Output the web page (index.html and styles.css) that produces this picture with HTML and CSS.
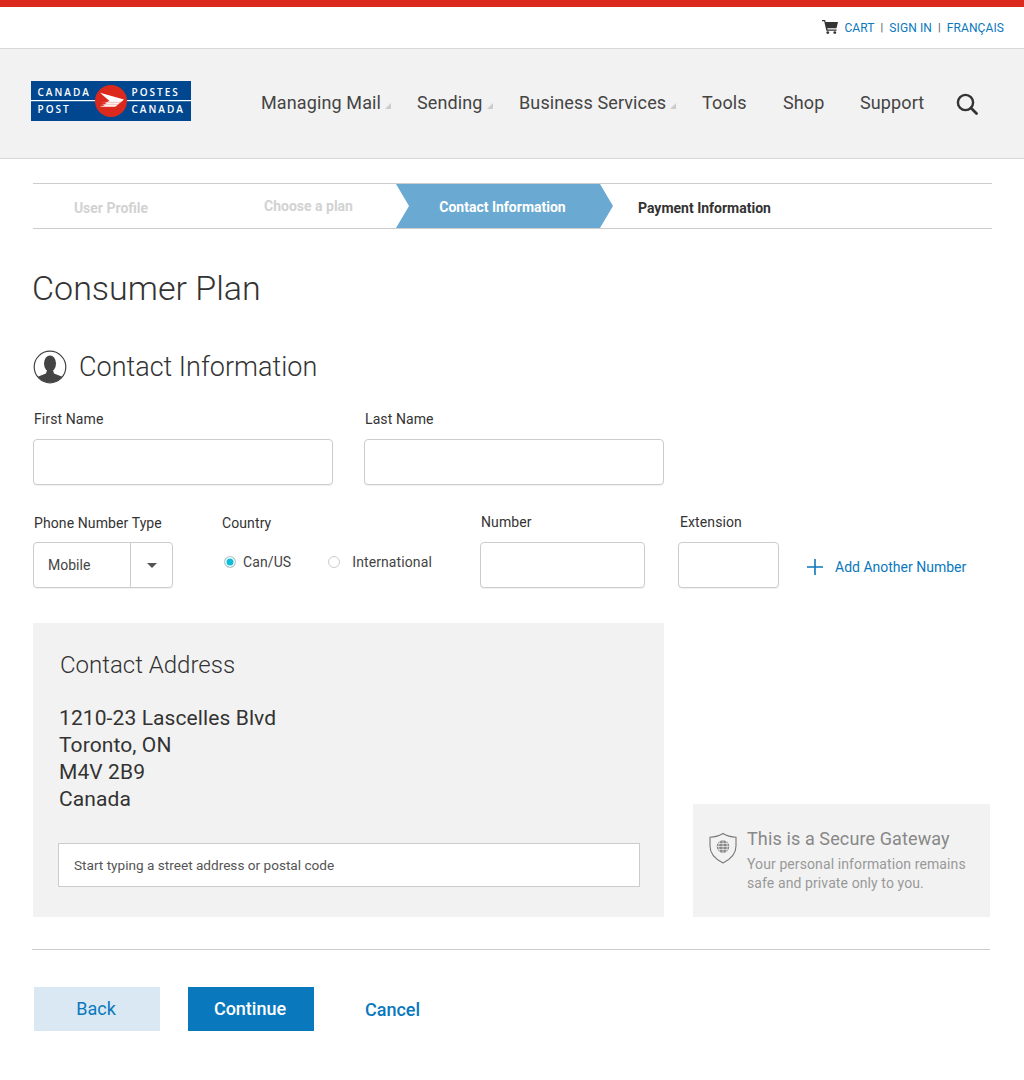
FILE: index.html
```html
<!DOCTYPE html>
<html lang="en">
<head>
  <meta charset="UTF-8">
  <meta name="viewport" content="width=device-width, initial-scale=1.0">
  <title>Consumer Plan - Contact Information</title>
  <link rel="stylesheet" href="styles.css">
</head>
<body>
  <div class="util-bar">
    <svg class="cart-icon" width="16" height="14" viewBox="0 0 16 14">
      <path d="M0 0h3l.7 2H16l-1.500 6.200H5.200l.4 1.400h9v1.200H4.400L2.200 1.200H0z" fill="#333"/>
      <circle cx="5.800" cy="12.600" r="1.400" fill="#333"/>
      <circle cx="12.800" cy="12.600" r="1.400" fill="#333"/>
    </svg>
    <a class="util-link" href="#">CART</a>
    <span class="util-sep">|</span>
    <a class="util-link" href="#">SIGN IN</a>
    <span class="util-sep">|</span>
    <a class="util-link" href="#">FRANÇAIS</a>
  </div>

  <header class="site-header">
    <svg class="logo" width="160" height="40" viewBox="0 0 160 40">
      <rect width="160" height="40" fill="#00478f"/>
      <rect y="19" width="160" height="1.200" fill="#fff"/>
      <g class="logo-text">
        <text x="6.500" y="15">CANADA</text>
        <text x="6.500" y="32">POST</text>
        <text x="100.500" y="15">POSTES</text>
        <text x="100.500" y="32">CANADA</text>
      </g>
      <circle cx="80" cy="20" r="16" fill="#dc291e"/>
      <path d="M69 11.700 93 18.500 84 26H69L74 24H71.500L76 22H73.500L78.500 20Z" fill="#fff"/>
      <path d="M71 21.300H90M70 23.300H88M69 25.300H85" stroke="#e8736b" stroke-width=".5"/>
    </svg>
    <nav class="main-nav">
      <a class="nav-item has-sub nav-mail" href="#">Managing Mail</a>
      <a class="nav-item has-sub nav-send" href="#">Sending</a>
      <a class="nav-item has-sub nav-biz" href="#">Business Services</a>
      <a class="nav-item nav-tools" href="#">Tools</a>
      <a class="nav-item nav-shop" href="#">Shop</a>
      <a class="nav-item nav-support" href="#">Support</a>
      <svg class="search-icon" width="22" height="22" viewBox="0 0 22 22">
        <circle cx="9.500" cy="9.500" r="7.600" fill="none" stroke="#333" stroke-width="2.400"/>
        <path d="M15 15l5.500 5.500" stroke="#333" stroke-width="2.800" stroke-linecap="round"/>
      </svg>
    </nav>
  </header>

  <main class="content">
    <div class="steps">
      <div class="step step-one">User Profile</div>
      <div class="step step-two">Choose a plan</div>
      <div class="step step-active">Contact Information</div>
      <div class="step step-next">Payment Information</div>
    </div>

    <h1>Consumer Plan</h1>

    <h2 class="section-title">
      <svg width="34" height="34" viewBox="0 0 34 34">
        <defs><clipPath id="ring"><circle cx="17" cy="17" r="15.500"/></clipPath></defs>
        <g clip-path="url(#ring)" fill="#444">
          <ellipse cx="17" cy="13.500" rx="6" ry="8"/>
          <path d="M14 20h6l1 3.500 9 3.500v8H4v-8l9-3.500z"/>
        </g>
        <circle cx="17" cy="17" r="15.800" fill="none" stroke="#444" stroke-width="1.200"/>
      </svg>
      Contact Information
    </h2>

    <div class="name-row">
      <div class="field">
        <label class="field-label">First Name</label>
        <input class="text-input name-input" type="text">
      </div>
      <div class="field">
        <label class="field-label">Last Name</label>
        <input class="text-input name-input" type="text">
      </div>
    </div>

    <div class="phone-row">
      <div class="field type-field">
        <label class="field-label">Phone Number Type</label>
        <div class="select-box">
          <span class="select-value">Mobile</span>
          <span class="select-arrow"></span>
        </div>
      </div>
      <div class="field country-field">
        <label class="field-label">Country</label>
        <div class="radios">
          <span class="radio radio-on"></span><span class="radio-label first-radio">Can/US</span>
          <span class="radio"></span><span class="radio-label">International</span>
        </div>
      </div>
      <div class="field number-field">
        <label class="field-label">Number</label>
        <input class="text-input number-input" type="text">
      </div>
      <div class="field ext-field">
        <label class="field-label">Extension</label>
        <input class="text-input ext-input" type="text">
      </div>
      <a class="add-number" href="#">
        <svg width="16" height="16" viewBox="0 0 16 16"><path d="M8 0v16M0 8h16" stroke="#0a78bd" stroke-width="1.600"/></svg>
        Add Another Number
      </a>
    </div>

    <div class="panels">
      <section class="address-panel">
        <h3>Contact Address</h3>
        <p class="address">1210-23 Lascelles Blvd<br>Toronto, ON<br>M4V 2B9<br>Canada</p>
        <input class="address-input" type="text" placeholder="Start typing a street address or postal code">
      </section>
      <aside class="secure-panel">
        <svg class="shield" width="28" height="32" viewBox="0 0 28 32" fill="none" stroke="#777">
          <path d="M14 1.500C18 4 22 5 27 5.300V14C27 22 21 27.500 14 31 7 27.500 1 22 1 14V5.300C6 5 10 4 14 1.500Z" stroke-width="1.100"/>
          <circle cx="14" cy="14.500" r="6.300" fill="#888" stroke="none"/>
          <path d="M7.700 14.500h12.600M8.500 11.500h11M8.500 17.500h11M14 8.200v12.600M11 8.900c-1.800 3.500-1.800 7.700 0 11.200M17 8.900c1.800 3.500 1.800 7.700 0 11.200" stroke="#f2f2f2" stroke-width=".7"/>
        </svg>
        <div>
          <div class="secure-title">This is a Secure Gateway</div>
          <p class="secure-text">Your personal information remains safe and private only to you.</p>
        </div>
      </aside>
    </div>

    <hr class="divider">

    <div class="actions">
      <a class="btn btn-back" href="#">Back</a>
      <a class="btn btn-continue" href="#">Continue</a>
      <a class="btn-cancel" href="#">Cancel</a>
    </div>
  </main>
</body>
</html>
```

FILE: styles.css
```css
body {
  font-family: Roboto, sans-serif;
  margin: 0;
  background-color: #fff;
  color: #333;
}

a {
  text-decoration: none;
}

/* top strip */
.util-bar {
  height: 41px;
  border-top: 7px solid #dc291e;
  border-bottom: 1px solid #d8d8d8;
  display: flex;
  align-items: center;
  justify-content: flex-end;
  padding: 0 20px 0 0;
  font-size: 12px;
  letter-spacing: 0.1px;
}

.cart-icon {
  margin: 0 6px 2px 0;
}

.util-link {
  color: #0a78bd;
}

.util-sep {
  margin: 0 6px;
  color: #555;
  font-size: 11px;
}

/* header */
.site-header {
  height: 109px;
  background-color: #f2f2f2;
  border-bottom: 1px solid #d8d8d8;
  display: flex;
  align-items: center;
  padding-left: 31px;
}

.logo {
  flex: none;
  margin-bottom: 5px;
}

.logo-text {
  fill: #fff;
  font-family: "Open Sans", sans-serif;
  font-size: 10px;
  font-weight: 600;
  letter-spacing: 2px;
}

.main-nav {
  display: flex;
  align-items: center;
  margin-left: 70px;
  margin-bottom: 2px;
  font-size: 18px;
  letter-spacing: 0.12px;
}

.nav-item {
  color: #444;
  position: relative;
}

.nav-mail { width: 156px; }
.nav-send { width: 102px; }
.nav-biz { width: 183px; }
.nav-tools { width: 81px; }
.nav-shop { width: 77px; }
.nav-support { width: 96px; }

.has-sub::after {
  content: "";
  position: absolute;
  bottom: 4px;
  border-left: 6px solid transparent;
  border-bottom: 6px solid #ccc;
  margin-left: 4px;
}

.search-icon {
  margin-top: 2px;
}

/* main */
.content {
  padding: 24px 32px 0 33px;
}

.steps {
  height: 44px;
  border-top: 1px solid #ccc;
  border-bottom: 1px solid #ccc;
  display: flex;
  align-items: center;
  font-size: 14px;
  font-weight: 700;
}

.step-one,
.step-two {
  color: #d2d2d2;
  text-align: center;
}

.step-one {
  width: 156px;
  margin-top: 4px;
}

.step-two {
  box-sizing: border-box;
  width: 207px;
  padding-left: 32px;
}

.step-active {
  box-sizing: border-box;
  width: 217px;
  height: 44px;
  line-height: 46px;
  padding-right: 4px;
  text-align: center;
  color: #fff;
  background-color: #6aaad2;
  clip-path: polygon(0 0, 204px 0, 100% 50%, 204px 100%, 0 100%, 13px 50%);
}

.step-next {
  margin-left: 25px;
  margin-top: 4px;
  color: #333;
}

h1 {
  font-size: 34px;
  font-weight: 300;
  line-height: 40px;
  margin: 39px 0 0 -1px;
  color: #333;
}

.section-title {
  display: flex;
  align-items: center;
  gap: 12px;
  font-size: 27px;
  font-weight: 300;
  line-height: 36px;
  margin: 41px 0 0;
  color: #333;
}

.name-row {
  display: flex;
  gap: 31px;
  margin-top: 25px;
}

.field-label {
  display: block;
  font-size: 14px;
  line-height: 18px;
  margin-bottom: 11px;
  padding-left: 1px;
  letter-spacing: 0.1px;
  color: #333;
}

.text-input {
  display: block;
  box-sizing: border-box;
  height: 46px;
  background: #fff;
  border: 1px solid #ccc;
  border-radius: 4px;
  box-shadow: 0 1px 1px rgba(0, 0, 0, 0.06);
}

.name-input {
  width: 300px;
}

.phone-row {
  display: flex;
  align-items: flex-start;
  margin-top: 28px;
}

.type-field {
  width: 189px;
}

.type-field .field-label,
.country-field .field-label {
  margin-bottom: 10px;
  margin-top: 1px;
}

.country-field .field-label {
  padding-left: 0;
}

.number-input {
  width: 165px;
}

.ext-input {
  width: 101px;
}

.number-field {
  width: 198px;
}

.ext-field {
  width: 129px;
}

.ext-field .field-label {
  padding-left: 2px;
}

.country-field {
  width: 258px;
}

.select-box {
  box-sizing: border-box;
  width: 140px;
  height: 46px;
  border: 1px solid #ccc;
  border-radius: 4px;
  display: flex;
  align-items: center;
  box-shadow: 0 1px 1px rgba(0, 0, 0, 0.06);
}

.select-value {
  box-sizing: border-box;
  width: 97px;
  padding-left: 14px;
  font-size: 14px;
  color: #444;
  border-right: 1px solid #ccc;
  line-height: 44px;
}

.select-arrow {
  margin-left: 16px;
  border-left: 5px solid transparent;
  border-right: 5px solid transparent;
  border-top: 5px solid #555;
}

.radios {
  display: flex;
  align-items: center;
  height: 24px;
  padding: 8px 0 0 2px;
  font-size: 14px;
  letter-spacing: 0.1px;
  color: #444;
}

.radio {
  box-sizing: border-box;
  width: 12px;
  height: 12px;
  border: 1px solid #ccc;
  border-radius: 50%;
  background: #fff;
  margin-right: 12px;
}

.radio-on {
  background: #10bcd8;
  box-shadow: inset 0 0 0 1.500px #fff;
  margin-right: 7px;
}

.first-radio {
  margin-right: 37px;
}

.add-number {
  display: flex;
  align-items: center;
  gap: 12px;
  margin-top: 46px;
  font-size: 14px;
  color: #0a78bd;
}

/* grey panels */
.panels {
  display: flex;
  align-items: flex-end;
  gap: 29px;
  margin-top: 35px;
}

.address-panel {
  box-sizing: border-box;
  width: 631px;
  height: 294px;
  background-color: #f2f2f2;
  padding: 26px 24px 0 27px;
}

.address-panel h3 {
  font-size: 24px;
  font-weight: 300;
  line-height: 32px;
  margin: 0 0 24px;
  color: #333;
}

.address {
  font-size: 21px;
  line-height: 27px;
  letter-spacing: 0.1px;
  margin: 0 0 30px -1px;
  color: #333;
}

.address-input {
  box-sizing: border-box;
  display: block;
  width: 582px;
  height: 44px;
  margin-left: -2px;
  padding: 0 15px;
  background: #fff;
  border: 1px solid #ccc;
  font-family: Roboto, sans-serif;
  font-size: 13.600px;
}

.address-input::placeholder {
  color: #555;
  opacity: 1;
}

.secure-panel {
  box-sizing: border-box;
  display: flex;
  gap: 10px;
  width: 297px;
  height: 113px;
  background-color: #f2f2f2;
  padding: 24px 16px 0;
}

.shield {
  flex: none;
  margin-top: 4px;
}

.secure-title {
  font-size: 18px;
  line-height: 22px;
  letter-spacing: 0.12px;
  color: #888;
}

.secure-text {
  font-size: 14px;
  line-height: 19px;
  letter-spacing: 0.1px;
  margin: 5px 0 0;
  color: #999;
}

.divider {
  border: 0;
  border-top: 1px solid #ccc;
  margin: 32px 2px 0 -1px;
}

.actions {
  display: flex;
  align-items: center;
  margin-top: 37px;
  padding-left: 1px;
  padding-bottom: 48px;
}

.btn {
  box-sizing: border-box;
  width: 126px;
  height: 44px;
  padding-right: 2px;
  line-height: 44px;
  text-align: center;
  font-size: 18px;
  font-weight: 500;
}

.btn-back {
  background-color: #d9e8f3;
  color: #0a78bd;
  font-weight: 400;
}

.btn-continue {
  background-color: #0a78bd;
  color: #fff;
  margin-left: 28px;
}

.btn-cancel {
  margin-left: 51px;
  font-size: 18px;
  font-weight: 500;
  color: #0a78bd;
}
```
